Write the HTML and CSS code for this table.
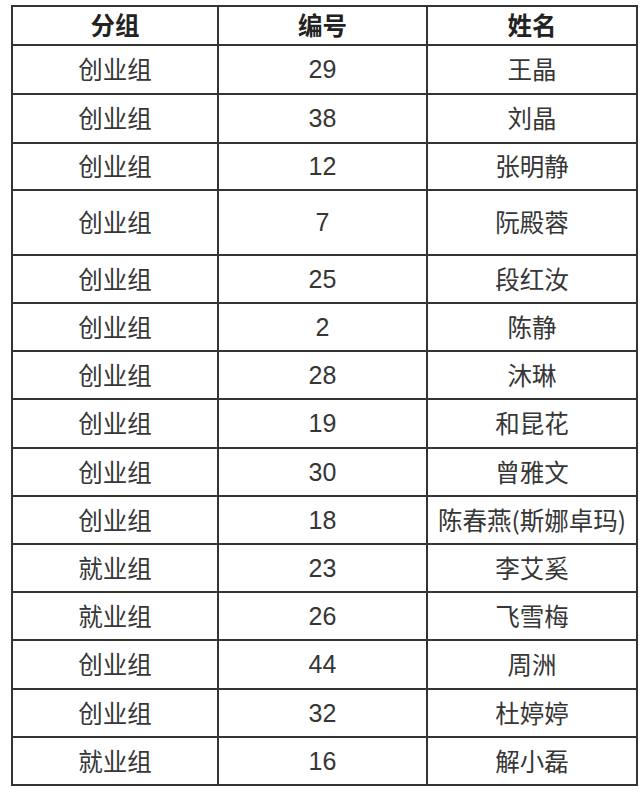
FILE: index.html
```html
<!DOCTYPE html>
<html lang="zh">
<head>
<meta charset="utf-8">
<title>分组名单</title>
<link rel="stylesheet" href="styles.css">
</head>
<body>
<table class="roster">
  <thead>
    <tr class="head"><th>分组</th><th>编号</th><th>姓名</th></tr>
  </thead>
  <tbody>
    <tr class="tall1"><td>创业组</td><td class="num">29</td><td>王晶</td></tr>
    <tr class="tall1"><td>创业组</td><td class="num">38</td><td>刘晶</td></tr>
    <tr class="short"><td>创业组</td><td class="num">12</td><td>张明静</td></tr>
    <tr class="big"><td>创业组</td><td class="num">7</td><td>阮殿蓉</td></tr>
    <tr><td>创业组</td><td class="num">25</td><td>段红汝</td></tr>
    <tr><td>创业组</td><td class="num">2</td><td>陈静</td></tr>
    <tr><td>创业组</td><td class="num">28</td><td>沐琳</td></tr>
    <tr class="tall1"><td>创业组</td><td class="num">19</td><td>和昆花</td></tr>
    <tr><td>创业组</td><td class="num">30</td><td>曾雅文</td></tr>
    <tr><td>创业组</td><td class="num">18</td><td>陈春燕(斯娜卓玛)</td></tr>
    <tr><td>就业组</td><td class="num">23</td><td>李艾奚</td></tr>
    <tr><td>就业组</td><td class="num">26</td><td>飞雪梅</td></tr>
    <tr class="tall1"><td>创业组</td><td class="num">44</td><td>周洲</td></tr>
    <tr><td>创业组</td><td class="num">32</td><td>杜婷婷</td></tr>
    <tr><td>就业组</td><td class="num">16</td><td>解小磊</td></tr>
  </tbody>
</table>
</body>
</html>
```
FILE: styles.css
```css
html, body {
  margin: 0;
  padding: 0;
  background: #ffffff;
}

body {
  padding: 5px 0 0 11px;
  font-family: "Noto Sans CJK SC", "Liberation Sans", sans-serif;
  color: #363636;
}

.roster {
  border-collapse: separate;
  border-spacing: 0;
  border-top: 2px solid #333333;
  border-left: 2px solid #333333;
  table-layout: fixed;
}

.roster th,
.roster td {
  box-sizing: content-box;
  padding: 0;
  height: 46px;
  border-right: 2px solid #333333;
  border-bottom: 2px solid #333333;
  text-align: center;
  vertical-align: middle;
  font-size: 24.5px;
  line-height: 1;
  font-weight: 400;
  white-space: nowrap;
}

.roster th:nth-child(1),
.roster td:nth-child(1) { width: 204px; }
.roster th:nth-child(2),
.roster td:nth-child(2) { width: 207px; }
.roster th:nth-child(3),
.roster td:nth-child(3) { width: 208px; }

.roster .head th {
  height: 37px;
  font-weight: 700;
  color: #222222;
}

.roster .tall1 td { height: 47px; }
.roster .short td { height: 45px; }
.roster .big td { height: 63px; }

.roster td.num {
  font-family: "Liberation Sans", "Noto Sans CJK SC", sans-serif;
  font-size: 25px;
}
```
